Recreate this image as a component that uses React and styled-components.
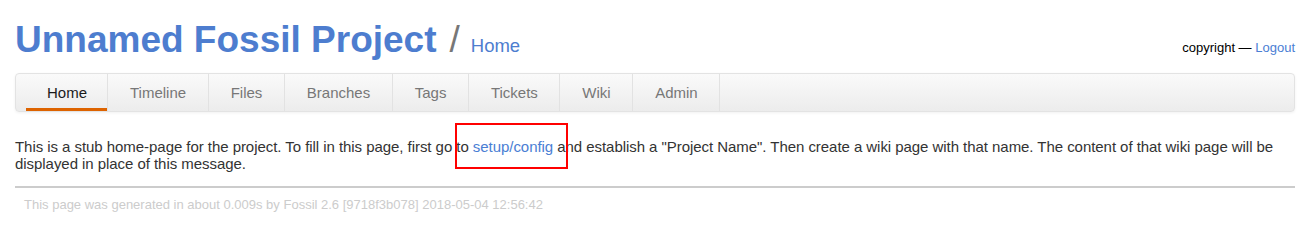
import React from "react";
import styled, { createGlobalStyle } from "styled-components";

const GlobalStyle = createGlobalStyle`
  body {
    margin: 0;
    background: #ffffff;
    font-family: "Liberation Sans", Arial, sans-serif;
    color: #333333;
  }
`;

const menu = [
  { title: "Home", active: true },
  { title: "Timeline" },
  { title: "Files" },
  { title: "Branches" },
  { title: "Tags" },
  { title: "Tickets" },
  { title: "Wiki" },
  { title: "Admin" },
];

const App = () => {
  return (
    <React.Fragment>
      <GlobalStyle />
      <Page>
        <Header>
          <TitleContainer>
            <Title>Unnamed Fossil Project</Title>
            <Slash>/</Slash>
            <SubTitle>Home</SubTitle>
          </TitleContainer>
          <Status>
            copyright — <Link href="#">Logout</Link>
          </Status>
        </Header>

        <MainMenu>
          {menu.map((item, index) => (
            <MenuItem key={index} href="#" $active={item.active}>
              {item.title}
            </MenuItem>
          ))}
        </MainMenu>

        <Content>
          This is a stub home-page for the project. To fill in this page, first
          go to <Link href="#">setup/config</Link> and establish a "Project
          Name". Then create a wiki page with that name. The content of that
          wiki page will be displayed in place of this message.
        </Content>

        <Divider />

        <Footer>
          This page was generated in about 0.009s by Fossil 2.6 [9718f3b078]
          2018-05-04 12:56:42
        </Footer>

        <Highlight />
      </Page>
    </React.Fragment>
  );
};

const Page = styled.div`
  position: relative;
  padding: 0 18px 0 15px;
`;
const Header = styled.div`
  display: flex;
  align-items: flex-end;
  justify-content: space-between;
  padding-top: 18px;
  height: 44px;
`;
const TitleContainer = styled.div`
  display: flex;
  align-items: baseline;
  white-space: nowrap;
`;
const Title = styled.span`
  font-size: 37px;
  font-weight: bold;
  line-height: 44px;
  color: #4d7dcf;
`;
const Slash = styled.span`
  font-size: 37px;
  line-height: 44px;
  color: #777777;
  margin: 0 11px 0 13px;
`;
const SubTitle = styled.span`
  font-size: 18.5px;
  color: #4d7dcf;
`;
const Status = styled.div`
  font-size: 13px;
  line-height: 18px;
  color: #000000;
  margin-bottom: 5px;
`;
const Link = styled.a`
  color: #4a7ed4;
  text-decoration: none;
`;
const MainMenu = styled.nav`
  display: flex;
  margin-top: 11px;
  height: 37px;
  padding-left: 10px;
  border: 1px solid #e3e3e3;
  border-radius: 4px;
  background: linear-gradient(#fafafa, #ececec);
  box-shadow: 0 1px 3px rgba(0, 0, 0, 0.06);
`;
const MenuItem = styled.a`
  display: flex;
  align-items: center;
  padding: ${(p) => (p.$active ? "0 20px 0 21px" : "0 21.5px 0 22px")};
  font-size: 15px;
  color: ${(p) => (p.$active ? "#1a1a1a" : "#777777")};
  text-decoration: none;
  border-right: 1px solid #e2e2e2;
  box-shadow: ${(p) => (p.$active ? "inset 0 -3px 0 #dd6300" : "none")};
`;
const Content = styled.div`
  margin-top: 26px;
  font-size: 15px;
  line-height: 17px;
  letter-spacing: -0.05px;
  color: #333333;
  padding-right: 2px;
`;
const Divider = styled.div`
  height: 2px;
  background: #cccccc;
  margin-top: 14px;
`;
const Footer = styled.div`
  padding: 9px 9px;
  font-size: 13px;
  line-height: 16px;
  color: #cccccc;
`;
const Highlight = styled.div`
  position: absolute;
  left: 455px;
  top: 123px;
  width: 109px;
  height: 42px;
  border: 2px solid #ff0000;
  pointer-events: none;
`;

export default App;
